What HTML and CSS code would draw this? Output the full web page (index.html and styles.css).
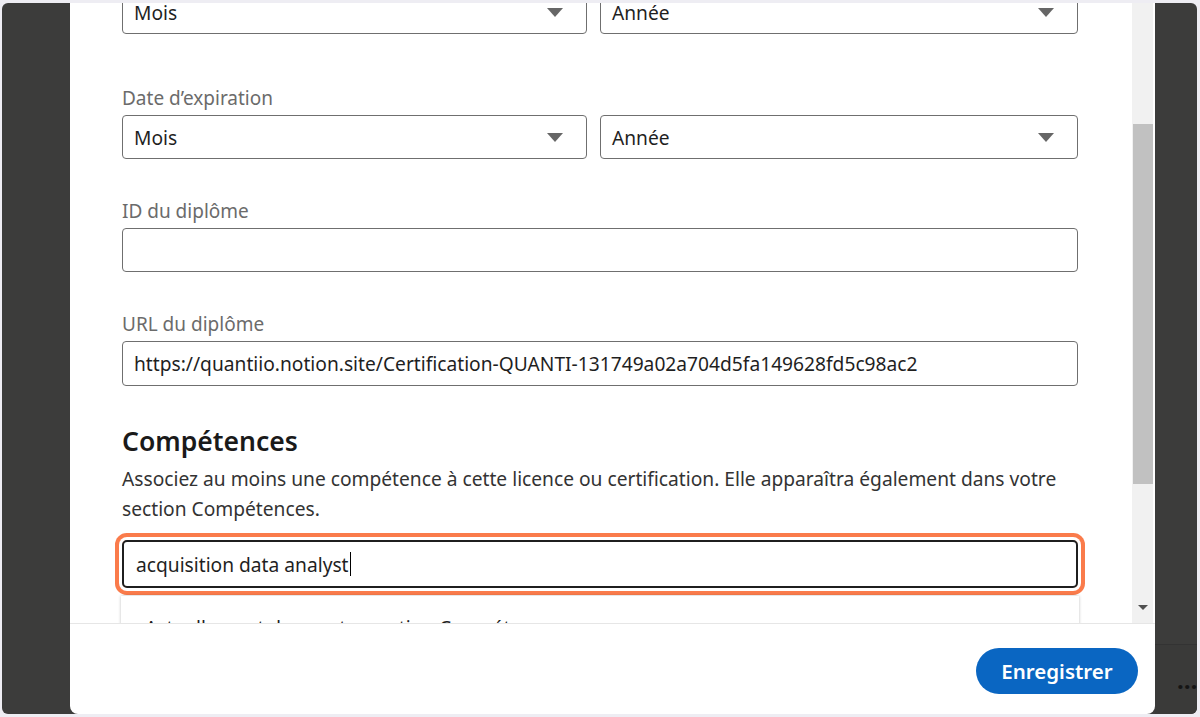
FILE: index.html
```html
<!DOCTYPE html>
<html lang="fr">
<head>
<meta charset="utf-8">
<title>Ajouter une licence ou certification</title>
<link rel="stylesheet" href="styles.css">
</head>
<body>
<div class="screen">
  <div class="backdrop-left"></div>
  <div class="modal">
    <div class="modal-body">
      <div class="scroll-area">
        <div class="form">
          <div class="row-2 first-row">
            <div class="select"><span>Mois</span><i class="caret"></i></div>
            <div class="select"><span>Année</span><i class="caret"></i></div>
          </div>

          <div class="group expire">
            <div class="label">Date d’expiration</div>
            <div class="row-2">
              <div class="select"><span>Mois</span><i class="caret"></i></div>
              <div class="select"><span>Année</span><i class="caret"></i></div>
            </div>
          </div>

          <div class="group">
            <div class="label">ID du diplôme</div>
            <div class="input"></div>
          </div>

          <div class="group">
            <div class="label">URL du diplôme</div>
            <div class="input input-url"><span>https://quantiio.notion.site/Certification-QUANTI-131749a02a704d5fa149628fd5c98ac2</span></div>
          </div>

          <h2 class="section-title">Compétences</h2>
          <p class="section-desc">Associez au moins une compétence à cette licence ou certification. Elle apparaîtra également dans votre<br>section Compétences.</p>

          <div class="skill-field">
            <div class="skill-input"><span>acquisition data analyst</span><i class="cursor"></i></div>
            <div class="suggest">
              <div class="suggest-item">Actuellement dans votre section Compétences</div>
            </div>
          </div>
        </div>
      </div>
      <div class="scrollbar">
        <div class="sb-track">
          <div class="sb-thumb"></div>
        </div>
        <div class="sb-arrow"><i></i></div>
      </div>
    </div>
    <div class="modal-footer">
      <button class="btn-primary">Enregistrer</button>
    </div>
  </div>
  <div class="backdrop-right">
    <div class="br-top"></div>
    <div class="br-bottom"><span class="dots">…</span></div>
  </div>
</div>
</body>
</html>
```

FILE: styles.css
```css
* { box-sizing: border-box; }

html, body {
  margin: 0;
  height: 717px;
  overflow: hidden;
}

body {
  background: #eeedf3;
  padding: 3px 3px 3px 2px;
  font-family: "Noto Sans", "Open Sans", sans-serif;
  color: #1f1f1f;
}

.screen {
  display: flex;
  height: 711px;
  background: #3c3c3b;
  border-radius: 6px;
  overflow: hidden;
}

.backdrop-left {
  width: 68px;
  flex: none;
}

.modal {
  width: 1085px;
  flex: none;
  background: #fff;
  display: flex;
  flex-direction: column;
  border-radius: 0 0 8px 8px;
  overflow: hidden;
}

.modal-body {
  height: 620px;
  display: flex;
  flex: none;
}

.scroll-area {
  flex: 1;
  overflow: hidden;
  padding: 0 54px 0 52px;
}

.form {
  margin-top: -13px;
}

.row-2 {
  display: grid;
  grid-template-columns: 465px 478px;
  gap: 13px;
}

.select, .input {
  height: 44px;
  border: 1px solid #6f6f6f;
  border-radius: 4px;
  display: flex;
  align-items: center;
  padding: 0 12px 0 11px;
  font-size: 19.2px;
  color: #1f1f1f;
}

.input-url {
  height: 45px;
  margin-top: 1px;
}

.select span, .input span { flex: 1; white-space: nowrap; }

.caret {
  width: 0;
  height: 0;
  border-left: 8.5px solid transparent;
  border-right: 8.5px solid transparent;
  border-top: 9px solid #666;
  margin-right: 11px;
}

.group {
  margin-top: 40px;
}

.group.expire {
  margin-top: 52px;
}

.label {
  font-size: 19px;
  line-height: 24px;
  color: #6b6b6b;
  margin-bottom: 5px;
}

.section-title {
  margin: 38px 0 0;
  font-size: 26.5px;
  line-height: 34px;
  font-weight: 600;
  color: #1a1a1a;
}

.section-desc {
  margin: 6px 0 0;
  font-size: 19.2px;
  line-height: 30px;
  color: #333;
}

.skill-field {
  margin-top: 16px;
  position: relative;
}

.skill-input {
  height: 48px;
  border: 2px solid #1f1f1f;
  border-radius: 5px;
  display: flex;
  align-items: center;
  padding: 0 12px;
  font-size: 19.2px;
  color: #1f1f1f;
  box-shadow: 0 0 0 3px #fff, 0 0 0 7px #fa7b4b;
}

.cursor {
  width: 1px;
  height: 24px;
  background: #000;
  margin-left: 1px;
}

.suggest {
  margin: 8px 0 0 -1px;
  width: 958px;
  background: #fff;
  box-shadow: 0 0 3px rgba(0,0,0,.25);
  padding: 20px 24px;
}

.suggest-item {
  font-size: 19.2px;
  line-height: 24px;
  color: #1f1f1f;
}

.scrollbar {
  width: 23px;
  flex: none;
  display: flex;
  flex-direction: column;
  padding-right: 2px;
}

.sb-track {
  flex: 1;
  background: #f1f1f1;
  padding-top: 121px;
}

.sb-thumb {
  height: 360px;
  background: #c1c1c1;
  margin: 0 0 0 1px;
}

.sb-arrow {
  height: 28px;
  background: #f1f1f1;
  display: flex;
  justify-content: center;
  padding-top: 10px;
}

.sb-arrow i {
  width: 0;
  height: 0;
  border-left: 5px solid transparent;
  border-right: 5px solid transparent;
  border-top: 5px solid #505050;
}

.modal-footer {
  flex: 1;
  border-top: 1px solid #e6e6e6;
  display: flex;
  justify-content: flex-end;
  align-items: center;
  padding: 0 17px 0 0;
}

.btn-primary {
  height: 46px;
  width: 162px;
  border: none;
  border-radius: 23px;
  background: #0a66c2;
  color: #fff;
  font-family: "Noto Sans", "Open Sans", sans-serif;
  font-size: 20.5px;
  font-weight: 600;
  margin-top: 3px;
}

.backdrop-right {
  flex: 1;
  display: flex;
  flex-direction: column;
}

.br-top {
  height: 642px;
  border-bottom: 1px solid #333;
}

.br-bottom {
  flex: 1;
  background: #3a3a39;
  padding: 18px 0 0 22px;
}

.dots {
  color: #151515;
  font-size: 24px;
  font-weight: 700;
  letter-spacing: 1px;
}
```
